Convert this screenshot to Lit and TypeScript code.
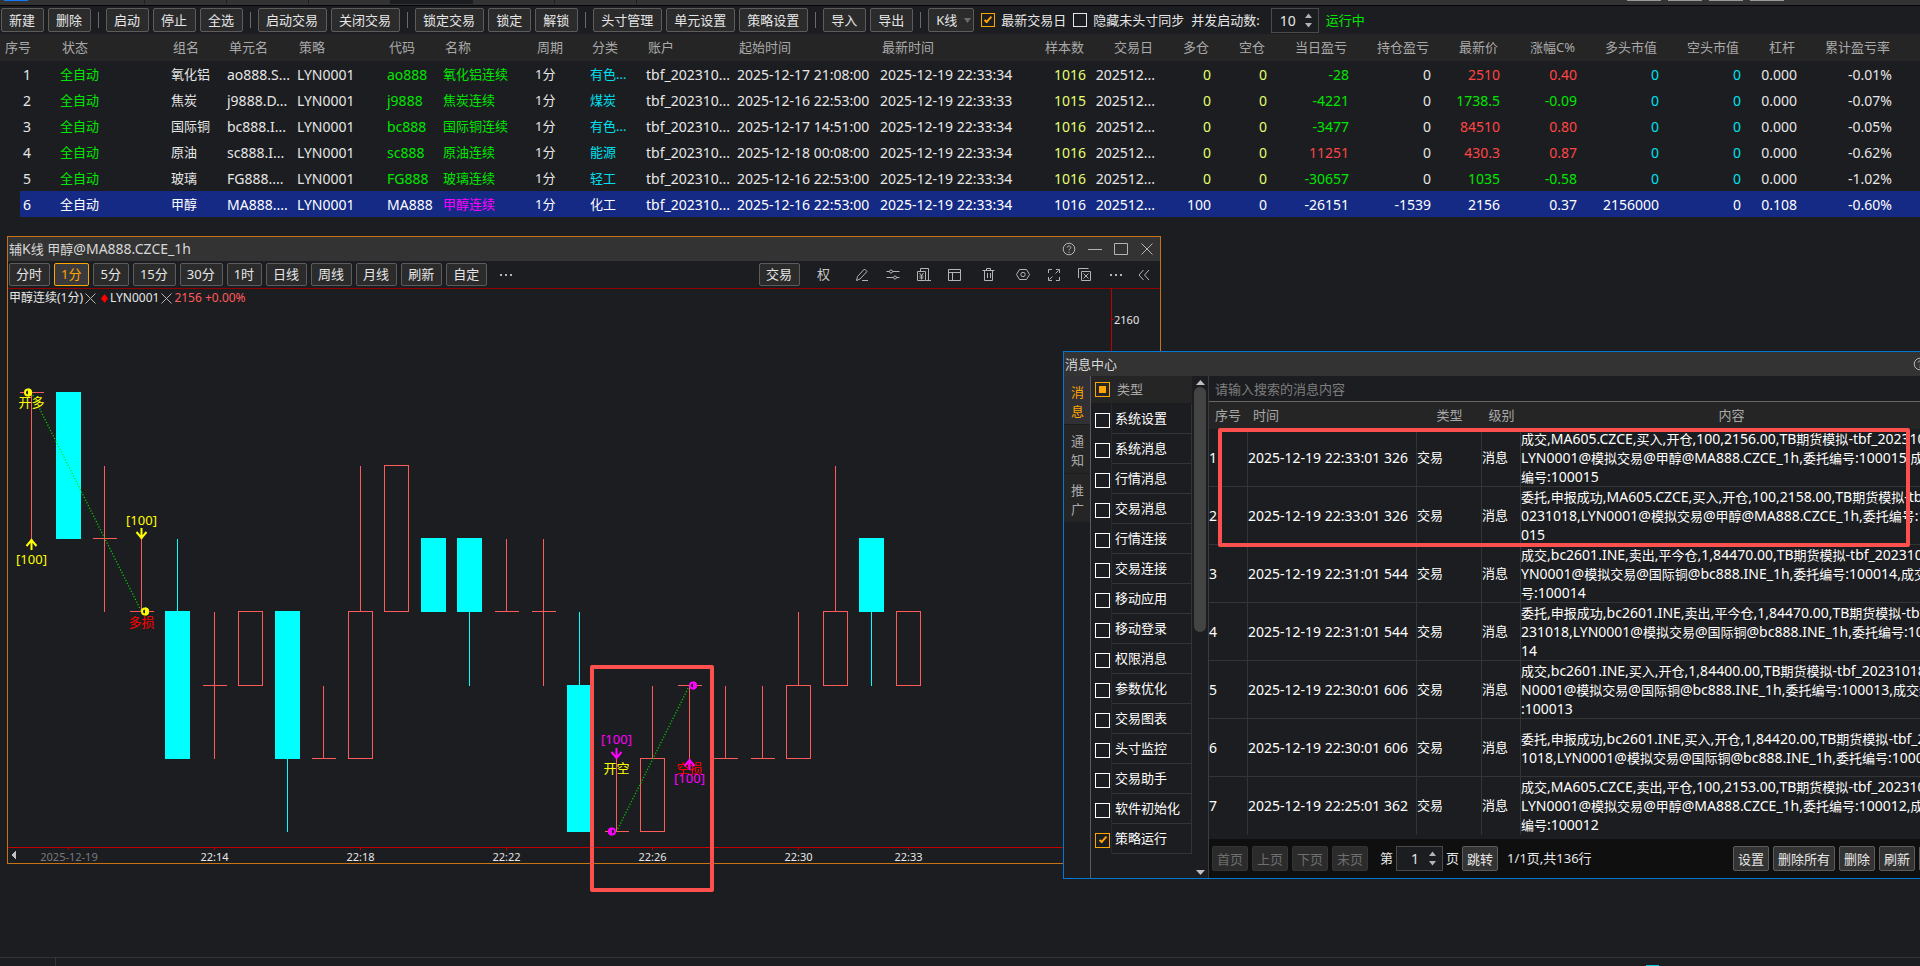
import { LitElement, html, svg, css, TemplateResult } from "lit";
import { customElement, property } from "lit/decorators.js";
import { classMap } from "lit/directives/class-map.js";

/* ---------- shared styles ---------- */

const base = css`
  :host {
    box-sizing: border-box;
    color: #e6e6e6;
    font: 13px/19px "Noto Sans", "Noto Sans CJK SC", sans-serif;
  }
  *,
  *::before,
  *::after {
    box-sizing: border-box;
  }
  button,
  input,
  select {
    margin: 0;
    font: inherit;
    color: inherit;
  }
  .btn {
    height: 24px;
    padding: 0 8px 0 7px;
    border: 1px solid #5c5c5c;
    border-radius: 2px;
    background: #2b2b2c;
    line-height: 20px;
    white-space: nowrap;
  }
  .han {
    font-size: 13px;
  }
  .icon {
    display: block;
    fill: none;
    stroke: #b4b4b4;
    stroke-width: 1;
  }
  .spin {
    display: flex;
    align-items: center;
    border: 1px solid #4a4a4c;
    background: #1c1d20;
  }
  .spin input {
    flex: 1;
    min-width: 0;
    padding: 0;
    border: 0;
    background: none;
    font-size: 14px;
    outline: none;
    appearance: textfield;
    -moz-appearance: textfield;
  }
  .spin input::-webkit-inner-spin-button {
    display: none;
  }
  .arrows {
    flex: none;
    margin-right: 6px;
    fill: #b4b4b4;
  }
  .check {
    flex: none;
    appearance: none;
    display: grid;
    place-items: center;
    width: 14px;
    height: 14px;
    border: 1px solid #e6e6e6;
  }
  .check:checked {
    border-color: #ffa500;
  }
  .check:checked::before {
    content: "";
    width: 4px;
    height: 8px;
    margin-bottom: 3px;
    border: solid #ffa500;
    border-width: 0 2px 2px 0;
    rotate: 42deg;
  }
`;

const arrows = html`<svg class="arrows" width="7" height="15" viewBox="0 0 7 15">
  <path d="M0 5 3.5 0.5 7 5zM0 10h7L3.5 14.5z" />
</svg>`;

const helpIcon = html`<svg class="icon" width="14" height="14" viewBox="0 0 14 14">
  <circle cx="7" cy="7" r="5.8" />
  <path d="M5.2 5.6c0-2.2 3.6-2.2 3.6 0 0 1.3-1.8 1.3-1.8 2.7M7 9.6v1.2" />
</svg>`;

const closeIcon = html`<svg class="icon" width="14" height="14" viewBox="0 0 14 14">
  <path d="M1.5 1.5l11 11M12.5 1.5l-11 11" />
</svg>`;

/* Han runs are set one step smaller than the Latin text and digits around them. */
const mixed = (text: string) =>
  text
    .split(/([\u4e00-\u9fff]+)/)
    .filter(Boolean)
    .map((run) => (/^[\u4e00-\u9fff]/.test(run) ? html`<span class="han">${run}</span>` : run));

/* ---------- strategy table ---------- */

type Align = "l" | "r";
interface Column {
  title: string;
  width: number;
  align: Align;
}

const columns: Column[] = [
  { title: "序号", width: 57, align: "l" },
  { title: "状态", width: 111, align: "l" },
  { title: "组名", width: 56, align: "l" },
  { title: "单元名", width: 70, align: "l" },
  { title: "策略", width: 90, align: "l" },
  { title: "代码", width: 56, align: "l" },
  { title: "名称", width: 92, align: "l" },
  { title: "周期", width: 55, align: "l" },
  { title: "分类", width: 56, align: "l" },
  { title: "账户", width: 91, align: "l" },
  { title: "起始时间", width: 143, align: "l" },
  { title: "最新时间", width: 143, align: "l" },
  { title: "样本数", width: 69, align: "r" },
  { title: "交易日", width: 69, align: "r" },
  { title: "多仓", width: 56, align: "r" },
  { title: "空仓", width: 56, align: "r" },
  { title: "当日盈亏", width: 82, align: "r" },
  { title: "持仓盈亏", width: 82, align: "r" },
  { title: "最新价", width: 69, align: "r" },
  { title: "涨幅C%", width: 77, align: "r" },
  { title: "多头市值", width: 82, align: "r" },
  { title: "空头市值", width: 82, align: "r" },
  { title: "杠杆", width: 56, align: "r" },
  { title: "累计盈亏率", width: 95, align: "r" },
];

const strategies: string[][] = [
  ["1", "全自动", "氧化铝", "ao888.S...", "LYN0001", "ao888", "氧化铝连续", "1分", "有色...", "tbf_202310...", "2025-12-17 21:08:00", "2025-12-19 22:33:34", "1016", "202512...", "0", "0", "-28", "0", "2510", "0.40", "0", "0", "0.000", "-0.01%"],
  ["2", "全自动", "焦炭", "j9888.D...", "LYN0001", "j9888", "焦炭连续", "1分", "煤炭", "tbf_202310...", "2025-12-16 22:53:00", "2025-12-19 22:33:33", "1015", "202512...", "0", "0", "-4221", "0", "1738.5", "-0.09", "0", "0", "0.000", "-0.07%"],
  ["3", "全自动", "国际铜", "bc888.I...", "LYN0001", "bc888", "国际铜连续", "1分", "有色...", "tbf_202310...", "2025-12-17 14:51:00", "2025-12-19 22:33:34", "1016", "202512...", "0", "0", "-3477", "0", "84510", "0.80", "0", "0", "0.000", "-0.05%"],
  ["4", "全自动", "原油", "sc888.I...", "LYN0001", "sc888", "原油连续", "1分", "能源", "tbf_202310...", "2025-12-18 00:08:00", "2025-12-19 22:33:34", "1016", "202512...", "0", "0", "11251", "0", "430.3", "0.87", "0", "0", "0.000", "-0.62%"],
  ["5", "全自动", "玻璃", "FG888....", "LYN0001", "FG888", "玻璃连续", "1分", "轻工", "tbf_202310...", "2025-12-16 22:53:00", "2025-12-19 22:33:34", "1016", "202512...", "0", "0", "-30657", "0", "1035", "-0.58", "0", "0", "0.000", "-1.02%"],
  ["6", "全自动", "甲醇", "MA888....", "LYN0001", "MA888", "甲醇连续", "1分", "化工", "tbf_202310...", "2025-12-16 22:53:00", "2025-12-19 22:33:34", "1016", "202512...", "100", "0", "-26151", "-1539", "2156", "0.37", "2156000", "0", "0.108", "-0.60%"],
];

const hanColumns = new Set([1, 2, 6, 7, 8]);

function cellColor(row: string[], col: number): string {
  if (row[0] === "6") return col === 6 ? "magenta" : "";
  if (col === 1 || col === 5 || col === 6) return "green";
  if (col === 8 || col === 20 || col === 21) return "cyan";
  if (col === 12 || col === 14 || col === 15) return "lime";
  if (col === 16) return row[16].startsWith("-") ? "green" : "red";
  if (col === 18 || col === 19) return row[19].startsWith("-") ? "green" : "red";
  return "";
}

@customElement("strategy-table")
export class StrategyTable extends LitElement {
  static styles = [
    base,
    css`
      :host {
        display: block;
      }
      table {
        width: 100%;
        table-layout: fixed;
        border-collapse: collapse;
      }
      th {
        height: 27px;
        padding: 0 5px;
        background: #252525;
        color: #a9a9a9;
        font-weight: 400;
        text-align: left;
        white-space: nowrap;
      }
      td {
        height: 26px;
        padding: 0 3px;
        font-size: 14px;
        white-space: nowrap;
      }
      td:first-child {
        padding-left: 23px;
      }
      td.han {
        font-size: 13px;
      }
      th.r,
      td.r {
        text-align: right;
      }
      .selected td {
        background: #142a85;
        color: #fff;
      }
      .selected td:first-child {
        background: linear-gradient(90deg, transparent 20px, #142a85 20px);
      }
      td.green {
        color: #00e600;
      }
      td.red {
        color: #ff4545;
      }
      td.cyan {
        color: #00e0f0;
      }
      td.lime {
        color: #e4ff70;
      }
      .selected td.magenta {
        color: #ff00ff;
      }
    `,
  ];

  render() {
    return html`<table>
      <colgroup>
        ${columns.map((c) => html`<col style="width:${c.width}px" />`)}
        <col />
      </colgroup>
      <thead>
        <tr>
          ${columns.map((c) => html`<th class=${c.align}>${c.title}</th>`)}
          <th></th>
        </tr>
      </thead>
      <tbody>
        ${strategies.map(
          (row) => html`<tr class=${classMap({ selected: row[0] === "6" })}>
            ${row.map(
              (v, i) =>
                html`<td class="${columns[i].align} ${cellColor(row, i)} ${hanColumns.has(i) ? "han" : ""}">${v}</td>`
            )}
            <td></td>
          </tr>`
        )}
      </tbody>
    </table>`;
  }
}

/* ---------- top toolbar ---------- */

const commandGroups = [
  ["新建", "删除"],
  ["启动", "停止", "全选"],
  ["启动交易", "关闭交易"],
  ["锁定交易", "锁定", "解锁"],
  ["头寸管理", "单元设置", "策略设置"],
  ["导入", "导出"],
];

@customElement("command-bar")
export class CommandBar extends LitElement {
  static styles = [
    base,
    css`
      :host {
        display: flex;
        align-items: center;
        gap: 4px;
        height: 28px;
        padding: 0 1px;
        white-space: nowrap;
      }
      .sep {
        width: 1px;
        height: 16px;
        margin: 0 3px;
        background: #6a6a6a;
      }
      .options {
        display: flex;
        align-items: center;
        gap: 7px;
      }
      .options label {
        display: flex;
        align-items: center;
        gap: 6px;
      }
      .pick {
        position: relative;
        display: flex;
        align-items: center;
      }
      .pick select {
        width: 46px;
        appearance: none;
        outline: none;
      }
      .pick svg {
        position: absolute;
        right: 3px;
        fill: #6c6c6c;
      }
      .spin {
        width: 48px;
        height: 25px;
        margin-left: 4px;
        padding-left: 8px;
      }
      .running {
        color: #00e600;
      }
    `,
  ];

  render() {
    return html`
      ${commandGroups.map(
        (group) => html`${group.map((name) => html`<button class="btn">${name}</button>`)}<span class="sep"></span>`
      )}
      <div class="options">
        <span class="pick">
          <select class="btn" aria-label="图表">
            <option>K线</option>
          </select>
          <svg width="7" height="5" viewBox="0 0 7 5"><path d="M0 0h7L3.5 5z" /></svg>
        </span>
        <label><input class="check" type="checkbox" checked />最新交易日</label>
        <label><input class="check" type="checkbox" />隐藏未头寸同步</label>
        <label for="parallel">并发启动数:</label>
        <span class="spin"><input id="parallel" type="number" value="10" />${arrows}</span>
        <span class="running">运行中</span>
      </div>
    `;
  }
}

/* ---------- candlestick chart ---------- */

interface Candle {
  up: boolean;
  top: number;
  bottom: number;
  high: number;
  low: number;
}

const k = (up: boolean, top: number, bottom: number, high = top, low = bottom): Candle => ({ up, top, bottom, high, low });

const candles: Candle[] = [
  k(true, 2159, 2159, 2159, 2157),
  k(false, 2159, 2157),
  k(true, 2157, 2157, 2158, 2156),
  k(true, 2156, 2156, 2157, 2156),
  k(false, 2156, 2154, 2157, 2154),
  k(true, 2155, 2155, 2156, 2154),
  k(true, 2156, 2155),
  k(false, 2156, 2154, 2156, 2153),
  k(true, 2154, 2154, 2155, 2154),
  k(true, 2156, 2154, 2158, 2154),
  k(true, 2158, 2156),
  k(false, 2157, 2156),
  k(false, 2157, 2156, 2157, 2155),
  k(true, 2156, 2156, 2157, 2156),
  k(true, 2156, 2156, 2157, 2155),
  k(false, 2155, 2153, 2156, 2153),
  k(true, 2153, 2153, 2154, 2153),
  k(true, 2154, 2153, 2155, 2153),
  k(true, 2155, 2155, 2155, 2154),
  k(true, 2154, 2154, 2155, 2154),
  k(true, 2154, 2154, 2155, 2154),
  k(true, 2155, 2154, 2156, 2154),
  k(true, 2156, 2155, 2158, 2155),
  k(false, 2157, 2156, 2157, 2155),
  k(true, 2156, 2155),
];

const timeLabels: [number, string][] = [
  [5, "22:14"],
  [9, "22:18"],
  [13, "22:22"],
  [17, "22:26"],
  [21, "22:30"],
  [24, "22:33"],
];

const px = (index: number) => Math.round(23 + 36.54 * index) + 0.5;
const py = (price: number) => Math.round(30 + 73.1 * (2160 - price)) + 0.5;

function drawCandle(c: Candle, i: number) {
  const x = px(i);
  const t = py(c.top);
  const b = py(c.bottom);
  const cls = c.up ? "rise" : "fall";
  return svg`<g class=${cls}>
    ${c.high > c.top ? svg`<line x1=${x} x2=${x} y1=${py(c.high)} y2=${t} />` : null}
    ${c.low < c.bottom ? svg`<line x1=${x} x2=${x} y1=${b} y2=${py(c.low)} />` : null}
    ${c.top === c.bottom
      ? svg`<line x1=${x - 12} x2=${x + 12} y1=${t} y2=${t} />`
      : svg`<rect x=${x - 12} y=${t} width="24" height=${b - t} />`}
  </g>`;
}

const arrowUp = (x: number, y: number) => svg`<path d="M${x} ${y}v11M${x - 5} ${y + 7}l5 -6 5 6" />`;
const arrowDown = (x: number, y: number) => svg`<path d="M${x} ${y}v-11M${x - 5} ${y - 7}l5 6 5 -6" />`;

@customElement("candle-chart")
export class CandleChart extends LitElement {
  static styles = [
    base,
    css`
      :host {
        display: block;
      }
      svg {
        display: block;
        shape-rendering: crispEdges;
      }
      .rise {
        fill: none;
        stroke: #ff5a5a;
      }
      .fall {
        fill: #00ffff;
        stroke: #00ffff;
      }
      .axis {
        stroke: #c00000;
      }
      .tick {
        fill: #e6e6e6;
        font-size: 11px;
      }
      .mid {
        text-anchor: middle;
      }
      .dim {
        fill: #7a7a7a;
      }
      .link {
        stroke: #00dc00;
        stroke-width: 1.4;
        stroke-dasharray: 1 2;
        shape-rendering: auto;
      }
      .yellow {
        fill: #ffff00;
      }
      .magenta {
        fill: #ff00ff;
      }
      .loss {
        fill: #ff0000;
      }
      .mark {
        fill: none;
        stroke-width: 2;
        shape-rendering: auto;
      }
      .mark.yellow {
        stroke: #ffff00;
      }
      .mark.magenta {
        stroke: #ff00ff;
      }
      .dot {
        shape-rendering: auto;
        stroke-width: 2;
        fill: #1c1d20;
      }
      .half {
        shape-rendering: auto;
      }
    `,
  ];

  private dot(x: number, y: number, color: string, right: boolean) {
    const sweep = right ? 1 : 0;
    return svg`<circle class="dot" cx=${x} cy=${y} r="3" stroke=${color} />
      <path class="half" fill=${color} d="M${x} ${y - 4}a4 4 0 0 ${sweep} 0 8z" />`;
  }

  render() {
    return html`<svg width="1152" height="574" viewBox="0 0 1152 574" role="img" aria-label="甲醇连续 1分">
      <g class="axis">
        <line x1="1103.5" x2="1103.5" y1="0" y2="558" />
        <line x1="1104" x2="1106" y1="30.5" y2="30.5" />
        <line x1="0" x2="1152" y1="558.5" y2="558.5" />
        <line x1="60.5" x2="60.5" y1="559" y2="561" />
        ${timeLabels.map(([i]) => svg`<line x1=${px(i)} x2=${px(i)} y1="559" y2="561" />`)}
      </g>
      <text class="tick" x="1106" y="35">2160</text>
      <path d="M8 562v8l-5 -4z" fill="#c0c0c0" />
      <text class="tick mid dim" x="61" y="572">2025-12-19</text>
      ${timeLabels.map(([i, t]) => svg`<text class="tick mid" x=${px(i)} y="572">${t}</text>`)}
      ${candles.map(drawCandle)}
      <line class="link" x1=${px(0)} y1=${py(2159)} x2=${px(3)} y2=${py(2156)} />
      <line class="link" x1=${px(16)} y1=${py(2153)} x2=${px(18)} y2=${py(2155)} />
      <text class="mid yellow" x=${px(0)} y="118">开多</text>
      <g class="mark yellow">${arrowUp(px(0), 250)}${arrowDown(px(3), 250)}</g>
      <text class="mid yellow" x=${px(0)} y="275">[100]</text>
      <text class="mid yellow" x=${px(3)} y="236">[100]</text>
      <text class="mid loss" x=${px(3)} y="338">多损</text>
      ${this.dot(20, py(2159), "#ffff00", true)} ${this.dot(137, py(2156), "#ffff00", true)}
      <text class="mid magenta" x=${px(16)} y="455">[100]</text>
      <text class="mid yellow" x=${px(16)} y="484">开空</text>
      <text class="mid loss" x=${px(18)} y="484">空损</text>
      <g class="mark magenta">${arrowDown(px(16), 470)}${arrowUp(px(18), 470)}</g>
      <text class="mid magenta" x=${px(18)} y="494">[100]</text>
      ${this.dot(604, py(2153), "#ff00ff", false)} ${this.dot(685, py(2155), "#ff00ff", true)}
    </svg>`;
  }
}

/* ---------- chart window ---------- */

const periods = ["分时", "1分", "5分", "15分", "30分", "1时", "日线", "周线", "月线", "刷新", "自定"];

const chartIcons: [string, TemplateResult | ReturnType<typeof svg>][][] = [
  [
    ["画线", svg`<path d="M1.5 12.5l1-4 7-7.5 2.5 2.5-7 7.5-3.5 1.500zM7 12.500h6" />`],
    ["参数", svg`<path d="M0.500 3.500h3M6.500 3.500h7M0.500 9.500h7M10.500 9.500h3" /><circle cx="5" cy="3.500" r="1.500" /><circle cx="9" cy="9.500" r="1.500" />`],
    ["资金", svg`<path d="M3.500 3V0.500h8v12M0.500 3.500h8v9h-8zM2.500 5l2 2.500 2-2.500M2.500 8h4M2.500 10h4M4.500 7.500v4M9 12.500h5" />`],
    ["布局", svg`<path d="M0.500 1.500h12v11h-12zM0.500 4.500h12M4.500 4.500v8" />`],
  ],
  [["删除", svg`<path d="M0.500 2.500h12M4.500 2.500v-2h4v2M2.500 2.500v10h8v-10M5.500 5v5M8.500 5v5" />`]],
  [
    ["设置", svg`<path d="M3.500 1.500h7l3 5-3 5h-7l-3-5z" /><circle cx="7" cy="6.500" r="2.200" />`],
    ["全屏", svg`<path d="M1.500 5V1.500H5M9 1.500h3.500V5M12.500 9v3.500H9M5 12.500H1.500V9M8.500 5.500l3-3M5.500 8.500l-3 3" />`],
    ["关闭全部", svg`<path d="M0.500 10V0.500h10M3.500 3.500h9v9h-9zM5.500 5.500l5 5M10.500 5.500l-5 5" />`],
    ["更多", svg`<path d="M1 7h2M6 7h2M11 7h2" stroke-width="2" />`],
  ],
];

@customElement("chart-window")
export class ChartWindow extends LitElement {
  static styles = [
    base,
    css`
      :host {
        display: flex;
        flex-direction: column;
        border: 1px solid #c87414;
        background: #1c1d20;
      }
      header {
        display: flex;
        align-items: center;
        gap: 12px;
        height: 24px;
        padding: 0 6px 0 1px;
        background: #333;
        color: #d8d8d8;
      }
      h2 {
        flex: 1;
        margin: 0;
        font-size: 14px;
        font-weight: 400;
      }
      .plain {
        display: grid;
        place-items: center;
        padding: 0;
        border: 0;
        background: none;
      }
      .bar {
        display: flex;
        align-items: center;
        gap: 4px;
        height: 28px;
        padding: 0 4px 0 1px;
        border-bottom: 1px solid #900000;
      }
      .bar .btn {
        height: 23px;
        line-height: 19px;
        padding: 0 7px 0 6px;
      }
      .bar .on {
        border-color: #ffa500;
        background: #3a3a3c;
        color: #ffa500;
      }
      .more {
        margin: 0 auto 0 8px;
      }
      .tools {
        display: flex;
        gap: 3px;
        padding-left: 4px;
      }
      .tools div {
        display: flex;
      }
      .tools .first {
        padding-right: 4px;
      }
      .tools .plain {
        width: 31px;
        height: 23px;
        color: #c8c8c8;
      }
      .tools .fold {
        width: 25px;
        margin-left: -3px;
      }
      .body {
        display: grid;
      }
      .body > * {
        grid-area: 1 / 1;
      }
      .legend {
        display: flex;
        align-items: center;
        align-self: start;
        gap: 2px;
        padding: 0 1px;
        font-size: 12px;
        line-height: 18px;
      }
      .price {
        color: #ff5a5a;
      }
      .series {
        display: flex;
        align-items: center;
        gap: 2px;
        padding-left: 3px;
      }
    `,
  ];

  private tool(name: string, body: unknown) {
    return html`<button class="plain" aria-label=${name}>
      <svg class="icon" width="14" height="14" viewBox="0 0 14 14">${body}</svg>
    </button>`;
  }

  render() {
    const cross = html`<svg class="icon" width="11" height="11" viewBox="0 0 11 11"><path d="M0.500 0.500l10 10M10.500 0.500l-10 10" /></svg>`;
    return html`
      <header>
        <h2>${mixed("辅K线 甲醇@MA888.CZCE_1h")}</h2>
        <button class="plain" aria-label="帮助">${helpIcon}</button>
        <button class="plain" aria-label="最小化">
          <svg class="icon" width="14" height="14" viewBox="0 0 14 14"><path d="M0 7.500h14" /></svg>
        </button>
        <button class="plain" aria-label="最大化">
          <svg class="icon" width="14" height="14" viewBox="0 0 14 14"><path d="M0.500 1.500h13v11h-13z" /></svg>
        </button>
        <button class="plain" aria-label="关闭">${closeIcon}</button>
      </header>
      <div class="bar">
        ${periods.map((p) => html`<button class="btn ${p === "1分" ? "on" : ""}">${p}</button>`)}
        <button class="plain more" aria-label="更多周期">
          <svg class="icon" width="14" height="14" viewBox="0 0 14 14"><path d="M1 7h2M6 7h2M11 7h2" stroke-width="2" /></svg>
        </button>
        <button class="btn">交易</button>
        <div class="tools">
          <div class="first"><button class="plain">权</button></div>
          ${chartIcons.map((g) => html`<div>${g.map(([n, b]) => this.tool(n, b))}</div>`)}
          <button class="plain fold" aria-label="收起">
            <svg class="icon" width="12" height="12" viewBox="0 0 12 12"><path d="M5.500 1 1 6l4.500 5M11 1 6.500 6l4.500 5" /></svg>
          </button>
        </div>
      </div>
      <div class="body">
        <candle-chart></candle-chart>
        <div class="legend">
          <span>甲醇连续(1分)</span>${cross}
          <span class="series">
            <svg width="7" height="9" viewBox="0 0 7 9"><path d="M3.500 0 7 4.500 3.500 9 0 4.500z" fill="#ff0000" /></svg>
            LYN0001
          </span>
          ${cross}
          <span class="price">2156 +0.00%</span>
        </div>
      </div>
    `;
  }
}

/* ---------- message center ---------- */

const messageTypes = ["系统设置", "系统消息", "行情消息", "交易消息", "行情连接", "交易连接", "移动应用", "移动登录", "权限消息", "参数优化", "交易图表", "头寸监控", "交易助手", "软件初始化", "策略运行"];

const messages: { time: string; lines: string[] }[] = [
  { time: "2025-12-19 22:33:01 326", lines: ["成交,MA605.CZCE,买入,开仓,100,2156.00,TB期货模拟-tbf_20231018,", "LYN0001@模拟交易@甲醇@MA888.CZCE_1h,委托编号:100015,成交", "编号:100015"] },
  { time: "2025-12-19 22:33:01 326", lines: ["委托,申报成功,MA605.CZCE,买入,开仓,100,2158.00,TB期货模拟-tbf_2", "0231018,LYN0001@模拟交易@甲醇@MA888.CZCE_1h,委托编号:100", "015"] },
  { time: "2025-12-19 22:31:01 544", lines: ["成交,bc2601.INE,卖出,平今仓,1,84470.00,TB期货模拟-tbf_20231018,L", "YN0001@模拟交易@国际铜@bc888.INE_1h,委托编号:100014,成交编", "号:100014"] },
  { time: "2025-12-19 22:31:01 544", lines: ["委托,申报成功,bc2601.INE,卖出,平今仓,1,84470.00,TB期货模拟-tbf_20", "231018,LYN0001@模拟交易@国际铜@bc888.INE_1h,委托编号:1000", "14"] },
  { time: "2025-12-19 22:30:01 606", lines: ["成交,bc2601.INE,买入,开仓,1,84400.00,TB期货模拟-tbf_20231018,LY", "N0001@模拟交易@国际铜@bc888.INE_1h,委托编号:100013,成交编号", ":100013"] },
  { time: "2025-12-19 22:30:01 606", lines: ["委托,申报成功,bc2601.INE,买入,开仓,1,84420.00,TB期货模拟-tbf_2023", "1018,LYN0001@模拟交易@国际铜@bc888.INE_1h,委托编号:100013"] },
  { time: "2025-12-19 22:25:01 362", lines: ["成交,MA605.CZCE,卖出,平仓,100,2153.00,TB期货模拟-tbf_20231018,", "LYN0001@模拟交易@甲醇@MA888.CZCE_1h,委托编号:100012,成交", "编号:100012"] },
];

@customElement("message-center")
export class MessageCenter extends LitElement {
  @property({ attribute: false }) active = "消息";

  static styles = [
    base,
    css`
      :host {
        display: flex;
        flex-direction: column;
        border: 1px solid #0078d4;
        background: #1c1d20;
      }
      header {
        display: flex;
        align-items: center;
        justify-content: space-between;
        height: 24px;
        padding: 0 6px 0 1px;
        background: #333;
        color: #d8d8d8;
      }
      h2 {
        margin: 0;
        font-size: 13px;
        font-weight: 400;
      }
      .tools {
        display: flex;
        gap: 12px;
      }
      .plain {
        padding: 0;
        border: 0;
        background: none;
      }
      .main {
        flex: 1;
        display: flex;
        min-height: 0;
      }
      nav {
        display: flex;
        flex-direction: column;
        gap: 1px;
        width: 27px;
        border-right: 1px solid #5a5a5c;
      }
      nav button {
        width: 26px;
        height: 48px;
        padding: 4px 6px 0 7px;
        border: 0;
        background: #252525;
        color: #a9a9a9;
        line-height: 19px;
      }
      nav .on {
        background: #303035;
        color: #ffa500;
      }
      .types {
        width: 101px;
      }
      .types label {
        display: flex;
        align-items: center;
        height: 30px;
        border-right: 1px solid #333436;
        color: #fff;
      }
      .box {
        display: flex;
        align-items: center;
        align-self: stretch;
        width: 21px;
        padding: 3px 0 0 4px;
        border-right: 1px solid #28292b;
      }
      .name {
        flex: 1;
        align-self: stretch;
        padding-left: 3px;
        border-bottom: 1px solid #333436;
        line-height: 29px;
      }
      .check {
        width: 15px;
        height: 15px;
        border-color: #fff;
      }
      .types .all {
        height: 27px;
        margin-bottom: 1px;
        padding-left: 4px;
        gap: 7px;
        border: 0;
        background: #252525;
        color: #a9a9a9;
      }
      .all .check {
        border-color: #ffa500;
      }
      .all .check::before {
        content: "";
        width: 7px;
        height: 7px;
        background: #ffa500;
      }
      .scroll {
        display: flex;
        flex-direction: column;
        align-items: center;
        gap: 2px;
        width: 17px;
        padding: 4px 0 3px;
        border-right: 1px solid #3c3c3e;
        fill: #c0c0c0;
      }
      .scroll svg {
        flex: none;
      }
      .track {
        flex: 1;
      }
      .thumb {
        width: 12px;
        height: 51%;
        border-radius: 6px;
        background: #444;
      }
      .list {
        flex: 1;
        display: flex;
        flex-direction: column;
        min-width: 0;
      }
      .search {
        height: 26px;
        padding: 0 6px;
        border: 0;
        border-bottom: 1px solid #666;
        background: none;
        outline: none;
      }
      .search::placeholder {
        color: #7d7d7d;
        opacity: 1;
      }
      .rows {
        flex: 1;
        background: linear-gradient(90deg, #252525, #252525) top / 100% 27px no-repeat;
      }
      table {
        table-layout: fixed;
        width: 733px;
        border-collapse: separate;
        border-spacing: 0;
      }
      .c-no,
      .c-level {
        width: 39px;
      }
      .c-time {
        width: 169px;
      }
      .c-type {
        width: 65px;
      }
      th {
        height: 27px;
        padding: 0;
        color: #a9a9a9;
        font-weight: 400;
      }
      th.left {
        padding-left: 5px;
        text-align: left;
      }
      th:first-child {
        padding-left: 6px;
      }
      td {
        height: 58px;
        padding: 0;
        border: solid #333436;
        border-width: 0 1px 1px 0;
        color: #fff;
        font-size: 14px;
        white-space: nowrap;
      }
      tr:last-child td {
        border-bottom-color: transparent;
      }
      td.han {
        font-size: 13px;
      }
      td div {
        height: 19px;
      }
      footer {
        display: flex;
        align-items: center;
        gap: 4px;
        height: 39px;
        padding: 0 4px 0 3px;
        background: #0f0f10;
      }
      footer .btn {
        height: 25px;
        padding: 0 4px;
        background: #333;
      }
      footer .btn:disabled {
        border-color: #333;
        background: #2b2b2c;
        color: #6e6e6e;
      }
      .pager {
        display: flex;
        align-items: center;
        gap: 3px;
        margin: 0 auto 0 8px;
        white-space: nowrap;
      }
      .spin {
        width: 47px;
        height: 25px;
        padding-left: 14px;
      }
      .total {
        padding-left: 6px;
      }
    `,
  ];

  render() {
    return html`
      <header>
        <h2>消息中心</h2>
        <div class="tools">
          <button class="plain" aria-label="帮助">${helpIcon}</button>
          <button class="plain" aria-label="关闭">${closeIcon}</button>
        </div>
      </header>
      <div class="main">
        <nav>
          ${["消息", "通知", "推广"].map((t) => html`<button class=${t === this.active ? "on" : ""}>${t}</button>`)}
        </nav>
        <div class="types">
          <label class="all"><input class="check" type="checkbox" .indeterminate=${true} />类型</label>
          ${messageTypes.map(
            (t) => html`<label>
              <span class="box"><input class="check" type="checkbox" ?checked=${t === "策略运行"} /></span>
              <span class="name">${t}</span>
            </label>`
          )}
        </div>
        <div class="scroll">
          <svg width="9" height="5" viewBox="0 0 9 5"><path d="M0 5 4.500 0 9 5z" /></svg>
          <div class="track"><div class="thumb"></div></div>
          <svg width="9" height="5" viewBox="0 0 9 5"><path d="M0 0h9L4.500 5z" /></svg>
        </div>
        <div class="list">
          <input class="search" type="text" aria-label="搜索" placeholder="请输入搜索的消息内容" />
          <div class="rows">
            <table>
              <colgroup>
                <col class="c-no" /><col class="c-time" /><col class="c-type" /><col class="c-level" /><col />
              </colgroup>
              <thead>
                <tr>
                  <th class="left">序号</th>
                  <th class="left">时间</th>
                  <th>类型</th>
                  <th>级别</th>
                  <th>内容</th>
                </tr>
              </thead>
              <tbody>
                ${messages.map(
                  (m, i) => html`<tr>
                    <td>${i + 1}</td>
                    <td>${m.time}</td>
                    <td class="han">交易</td>
                    <td class="han">消息</td>
                    <td>${m.lines.map((l) => html`<div>${mixed(l)}</div>`)}</td>
                  </tr>`
                )}
              </tbody>
            </table>
          </div>
          <footer>
            ${["首页", "上页", "下页", "末页"].map((t) => html`<button class="btn" disabled>${t}</button>`)}
            <div class="pager">
              <label for="page">第</label>
              <span class="spin"><input id="page" type="number" value="1" />${arrows}</span>
              <span>页</span>
              <button class="btn">跳转</button>
              <span class="total">1/1页,共136行</span>
            </div>
            ${["设置", "删除所有", "删除", "刷新", "导出"].map((t) => html`<button class="btn">${t}</button>`)}
          </footer>
        </div>
      </div>
    `;
  }
}

/* ---------- desktop ---------- */

@customElement("app-root")
export class AppRoot extends LitElement {
  static styles = [
    base,
    css`
      :host {
        position: relative;
        display: flex;
        flex-direction: column;
        min-height: 100vh;
        overflow: hidden;
        background: #1c1d20;
      }
      .tabs {
        display: flex;
        align-items: flex-start;
        height: 6px;
        border-bottom: 1px solid #050505;
        background: #333;
      }
      .tab {
        width: 82px;
        height: 4px;
        border-right: 1px solid #1c1d20;
      }
      .tab.home {
        width: 145px;
        padding-left: 4px;
      }
      .tab.on {
        background: #1c1d20;
      }
      .accent {
        width: 24px;
        height: 1px;
        background: #1478ff;
      }
      .thumbs {
        display: flex;
        gap: 7px;
        margin: 0 136px 0 auto;
      }
      .thumbs i {
        width: 34px;
        height: 1px;
        background: #9a9a9a;
      }
      .desktop {
        flex: 1;
      }
      .status {
        display: flex;
        align-items: flex-end;
        justify-content: space-between;
        height: 9px;
        border-top: 1px solid #333436;
      }
      .cell {
        width: 56px;
        height: 8px;
        border-right: 1px solid #333436;
      }
      .meter {
        width: 13px;
        height: 1px;
        margin-right: 261px;
        background: #00c8dc;
      }
      chart-window {
        position: absolute;
        left: 7px;
        top: 236px;
        width: 1154px;
      }
      message-center {
        position: absolute;
        left: 1063px;
        top: 351px;
        width: 897px;
        height: 528px;
      }
      .frame {
        position: absolute;
        border: 4px solid #ff5050;
        border-radius: 2px;
        pointer-events: none;
      }
      .frame.trade {
        left: 590px;
        top: 665px;
        width: 124px;
        height: 227px;
      }
      .frame.log {
        left: 1218px;
        top: 428px;
        width: 692px;
        height: 119px;
      }
    `,
  ];

  render() {
    return html`
      <div class="tabs">
        <div class="tab home"><div class="accent"></div></div>
        <div class="tab"></div>
        <div class="tab"></div>
        <div class="tab"></div>
        <div class="tab on"></div>
        <div class="tab"></div>
        <div class="tab"></div>
        <div class="thumbs"><i></i><i></i><i></i><i></i></div>
      </div>
      <command-bar></command-bar>
      <strategy-table></strategy-table>
      <div class="desktop"></div>
      <div class="status"><div class="cell"></div><div class="meter"></div></div>
      <chart-window></chart-window>
      <message-center></message-center>
      <div class="frame trade"></div>
      <div class="frame log"></div>
    `;
  }
}
